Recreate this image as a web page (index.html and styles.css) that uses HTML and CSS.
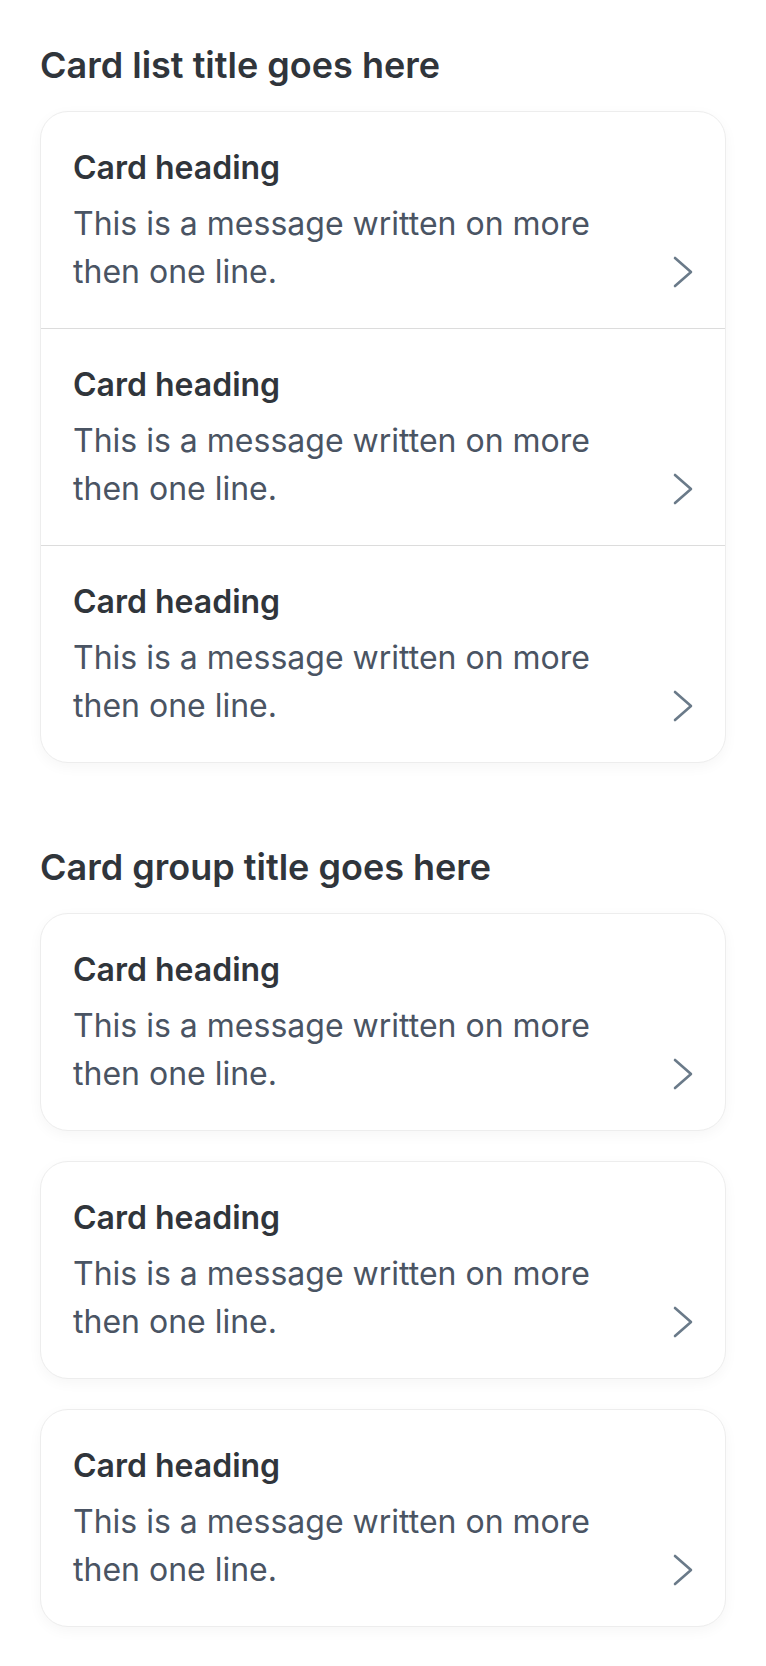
FILE: index.html
```html
<!DOCTYPE html>
<html lang="en">
<head>
    <meta charset="UTF-8">
    <meta name="viewport" content="width=device-width, initial-scale=1.0">
    <title>Cards</title>
    <link rel="stylesheet" href="styles.css">
</head>
<body>
    <!-- Lista de tarjetas -->
    <section class="section">
        <h2 class="section-title">Card list title goes here</h2>
        <div class="card-list">
            <a class="card-row" href="#">
                <div class="card-text">
                    <h3>Card heading</h3>
                    <p>This is a message written on more then one line.</p>
                </div>
                <span class="chevron"><svg width="20" height="32" viewBox="0 0 20 32"><polyline points="2,2 18,16 2,30"/></svg></span>
            </a>
            <a class="card-row" href="#">
                <div class="card-text">
                    <h3>Card heading</h3>
                    <p>This is a message written on more then one line.</p>
                </div>
                <span class="chevron"><svg width="20" height="32" viewBox="0 0 20 32"><polyline points="2,2 18,16 2,30"/></svg></span>
            </a>
            <a class="card-row" href="#">
                <div class="card-text">
                    <h3>Card heading</h3>
                    <p>This is a message written on more then one line.</p>
                </div>
                <span class="chevron"><svg width="20" height="32" viewBox="0 0 20 32"><polyline points="2,2 18,16 2,30"/></svg></span>
            </a>
        </div>
    </section>

    <!-- Grupo de tarjetas -->
    <section class="section">
        <h2 class="section-title">Card group title goes here</h2>
        <div class="card-group">
            <a class="card-row card" href="#">
                <div class="card-text">
                    <h3>Card heading</h3>
                    <p>This is a message written on more then one line.</p>
                </div>
                <span class="chevron"><svg width="20" height="32" viewBox="0 0 20 32"><polyline points="2,2 18,16 2,30"/></svg></span>
            </a>
            <a class="card-row card" href="#">
                <div class="card-text">
                    <h3>Card heading</h3>
                    <p>This is a message written on more then one line.</p>
                </div>
                <span class="chevron"><svg width="20" height="32" viewBox="0 0 20 32"><polyline points="2,2 18,16 2,30"/></svg></span>
            </a>
            <a class="card-row card" href="#">
                <div class="card-text">
                    <h3>Card heading</h3>
                    <p>This is a message written on more then one line.</p>
                </div>
                <span class="chevron"><svg width="20" height="32" viewBox="0 0 20 32"><polyline points="2,2 18,16 2,30"/></svg></span>
            </a>
        </div>
    </section>
</body>
</html>
```

FILE: styles.css
```css
/* Estilos generales */
* {
    margin: 0;
    padding: 0;
    box-sizing: border-box;
    font-family: 'Inter', 'Noto Sans', sans-serif;
}

body {
    background: #fff;
    padding: 41px 40px 39px;
    display: flex;
    flex-direction: column;
    gap: 80px;
}

/* Títulos de sección */
.section-title {
    font-size: 36px;
    font-weight: 600;
    line-height: 48px;
    color: #30353b;
    margin-bottom: 22px;
}

/* Lista */
.card-list {
    background: #fff;
    border: 1px solid #ededed;
    border-radius: 28px;
    box-shadow: 0 4px 14px rgba(0, 0, 0, 0.04);
    overflow: hidden;
}

.card-list .card-row + .card-row {
    border-top: 1px solid #dcdcdc;
}

/* Grupo */
.card-group {
    display: flex;
    flex-direction: column;
    gap: 30px;
}

.card {
    background: #fff;
    border: 1px solid #ededed;
    border-radius: 28px;
    box-shadow: 0 4px 14px rgba(0, 0, 0, 0.04);
}

/* Fila de tarjeta */
.card-row {
    display: flex;
    gap: 40px;
    padding: 32px;
    text-decoration: none;
}

.card-text {
    flex: 1;
}

.card-text h3 {
    font-size: 32px;
    font-weight: 600;
    line-height: 48px;
    color: #30353b;
    margin-bottom: 8px;
}

.card-text p {
    font-size: 32px;
    font-weight: 400;
    line-height: 48px;
    color: #4a5463;
}

.chevron {
    align-self: flex-end;
    height: 48px;
    display: flex;
    align-items: center;
}

.chevron polyline {
    fill: none;
    stroke: #6a7a89;
    stroke-width: 2.6;
    stroke-linecap: round;
    stroke-linejoin: round;
}
```
